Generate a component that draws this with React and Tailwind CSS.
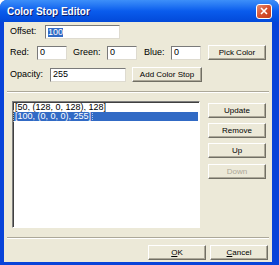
import React from "react";

const font = { fontFamily: '"Liberation Sans", Arial, sans-serif' };

// XP-ish raised push button
const Btn = ({ children, className = "", disabled = false }) => (
  <div
    className={`flex items-center justify-center h-[15px] bg-[#ece9d8] border border-t-white border-l-white border-b-[#716f64] border-r-[#716f64] shadow-[inset_-1px_-1px_0_#aca899] text-[8px] leading-none ${
      disabled ? "text-[#aca899]" : "text-black"
    } ${className}`}
  >
    {children}
  </div>
);

// sunken text field
const Field = ({ value, className = "", selected = false }) => (
  <div
    className={`h-[14px] bg-white border border-t-[#7a7a7a] border-l-[#7a7a7a] border-b-[#dedbd0] border-r-[#dedbd0] flex items-center pl-[2px] text-[9px] leading-none ${className}`}
  >
    {selected ? (
      <span className="bg-[#316ac5] text-white">{value}</span>
    ) : (
      <span>{value}</span>
    )}
  </div>
);

const Etched = () => (
  <div className="mx-[3px] border-t border-t-[#aca899] border-b border-b-white" />
);

const App = () => {
  return (
    <div
      className="w-[279px] h-[265px] bg-[#0843d9] rounded-t-[7px] flex flex-col overflow-hidden"
      style={font}
    >
      {/* Title bar */}
      <div className="h-[22px] shrink-0 bg-gradient-to-b from-[#3d8ff9] via-[#0a5ced] to-[#0349d9] flex items-center pl-[7px] pr-[7px]">
        <span className="text-white font-bold text-[10px] [text-shadow:1px_1px_0_#0a1e6e] flex-1">
          Color Stop Editor
        </span>
        <div className="w-[16px] h-[15px] rounded-[3px] border border-white bg-gradient-to-br from-[#e48a6f] via-[#d7502e] to-[#c43c1c] flex items-center justify-center">
          <svg width="8" height="8" viewBox="0 0 8 8">
            <path d="M1 1L7 7M7 1L1 7" stroke="white" strokeWidth="1.6" />
          </svg>
        </div>
      </div>

      {/* Client area */}
      <div className="flex-1 ml-[4px] mr-[7px] mb-[3px] bg-[#ece9d8] flex flex-col text-black">
        <div className="pl-[6px] pt-[3px] flex flex-col">
          <div className="flex items-center">
            <span className="w-[35px] text-[9px]">Offset:</span>
            <Field value="100" selected className="w-[75px]" />
          </div>

          <div className="flex items-center mt-[6px]">
            <span className="w-[27px] text-[9px]">Red:</span>
            <Field value="0" className="w-[30px]" />
            <span className="ml-[6px] w-[34px] text-[9px]">Green:</span>
            <Field value="0" className="w-[30px]" />
            <span className="ml-[7px] w-[27px] text-[9px]">Blue:</span>
            <Field value="0" className="w-[30px]" />
            <Btn className="ml-[7px] w-[58px]">Pick Color</Btn>
          </div>

          <div className="flex items-center mt-[7px]">
            <span className="w-[40px] text-[9px]">Opacity:</span>
            <Field value="255" className="w-[76px]" />
            <Btn className="ml-[6px] w-[70px]">Add Color Stop</Btn>
          </div>
        </div>

        <div className="mt-[9px]">
          <Etched />
        </div>

        <div className="flex mt-[8px] pl-[8px]">
          {/* list box */}
          <div className="w-[188px] h-[127px] bg-white border border-t-[#7f7f7f] border-l-[#7f7f7f] border-b-white border-r-white shadow-[inset_1px_1px_0_#404040] pt-[1px] pl-[1px] text-[9px] leading-[9px]">
            <div className="pl-[1px] h-[9px]">[50, (128, 0, 128), 128]</div>
            <div className="h-[9px] bg-[#316ac5] text-white mr-[1px]">
              <span className="outline outline-1 outline-dotted outline-[#ffffff99] pl-[1px] pr-[1px]">
                [100, (0, 0, 0), 255]
              </span>
            </div>
          </div>

          {/* action buttons */}
          <div className="ml-[8px] mt-[2px] flex flex-col w-[58px]">
            <Btn>Update</Btn>
            <Btn className="mt-[5px]">Remove</Btn>
            <Btn className="mt-[5px]">Up</Btn>
            <Btn className="mt-[6px]" disabled>
              Down
            </Btn>
          </div>
        </div>

        <div className="mt-[9px]">
          <Etched />
        </div>

        <div className="flex justify-end mt-[6px] pr-[4px] gap-[4px]">
          <Btn className="w-[58px]">
            <span className="underline">O</span>K
          </Btn>
          <Btn className="w-[58px]">
            <span className="underline">C</span>ancel
          </Btn>
        </div>
      </div>
    </div>
  );
};

export default App;
